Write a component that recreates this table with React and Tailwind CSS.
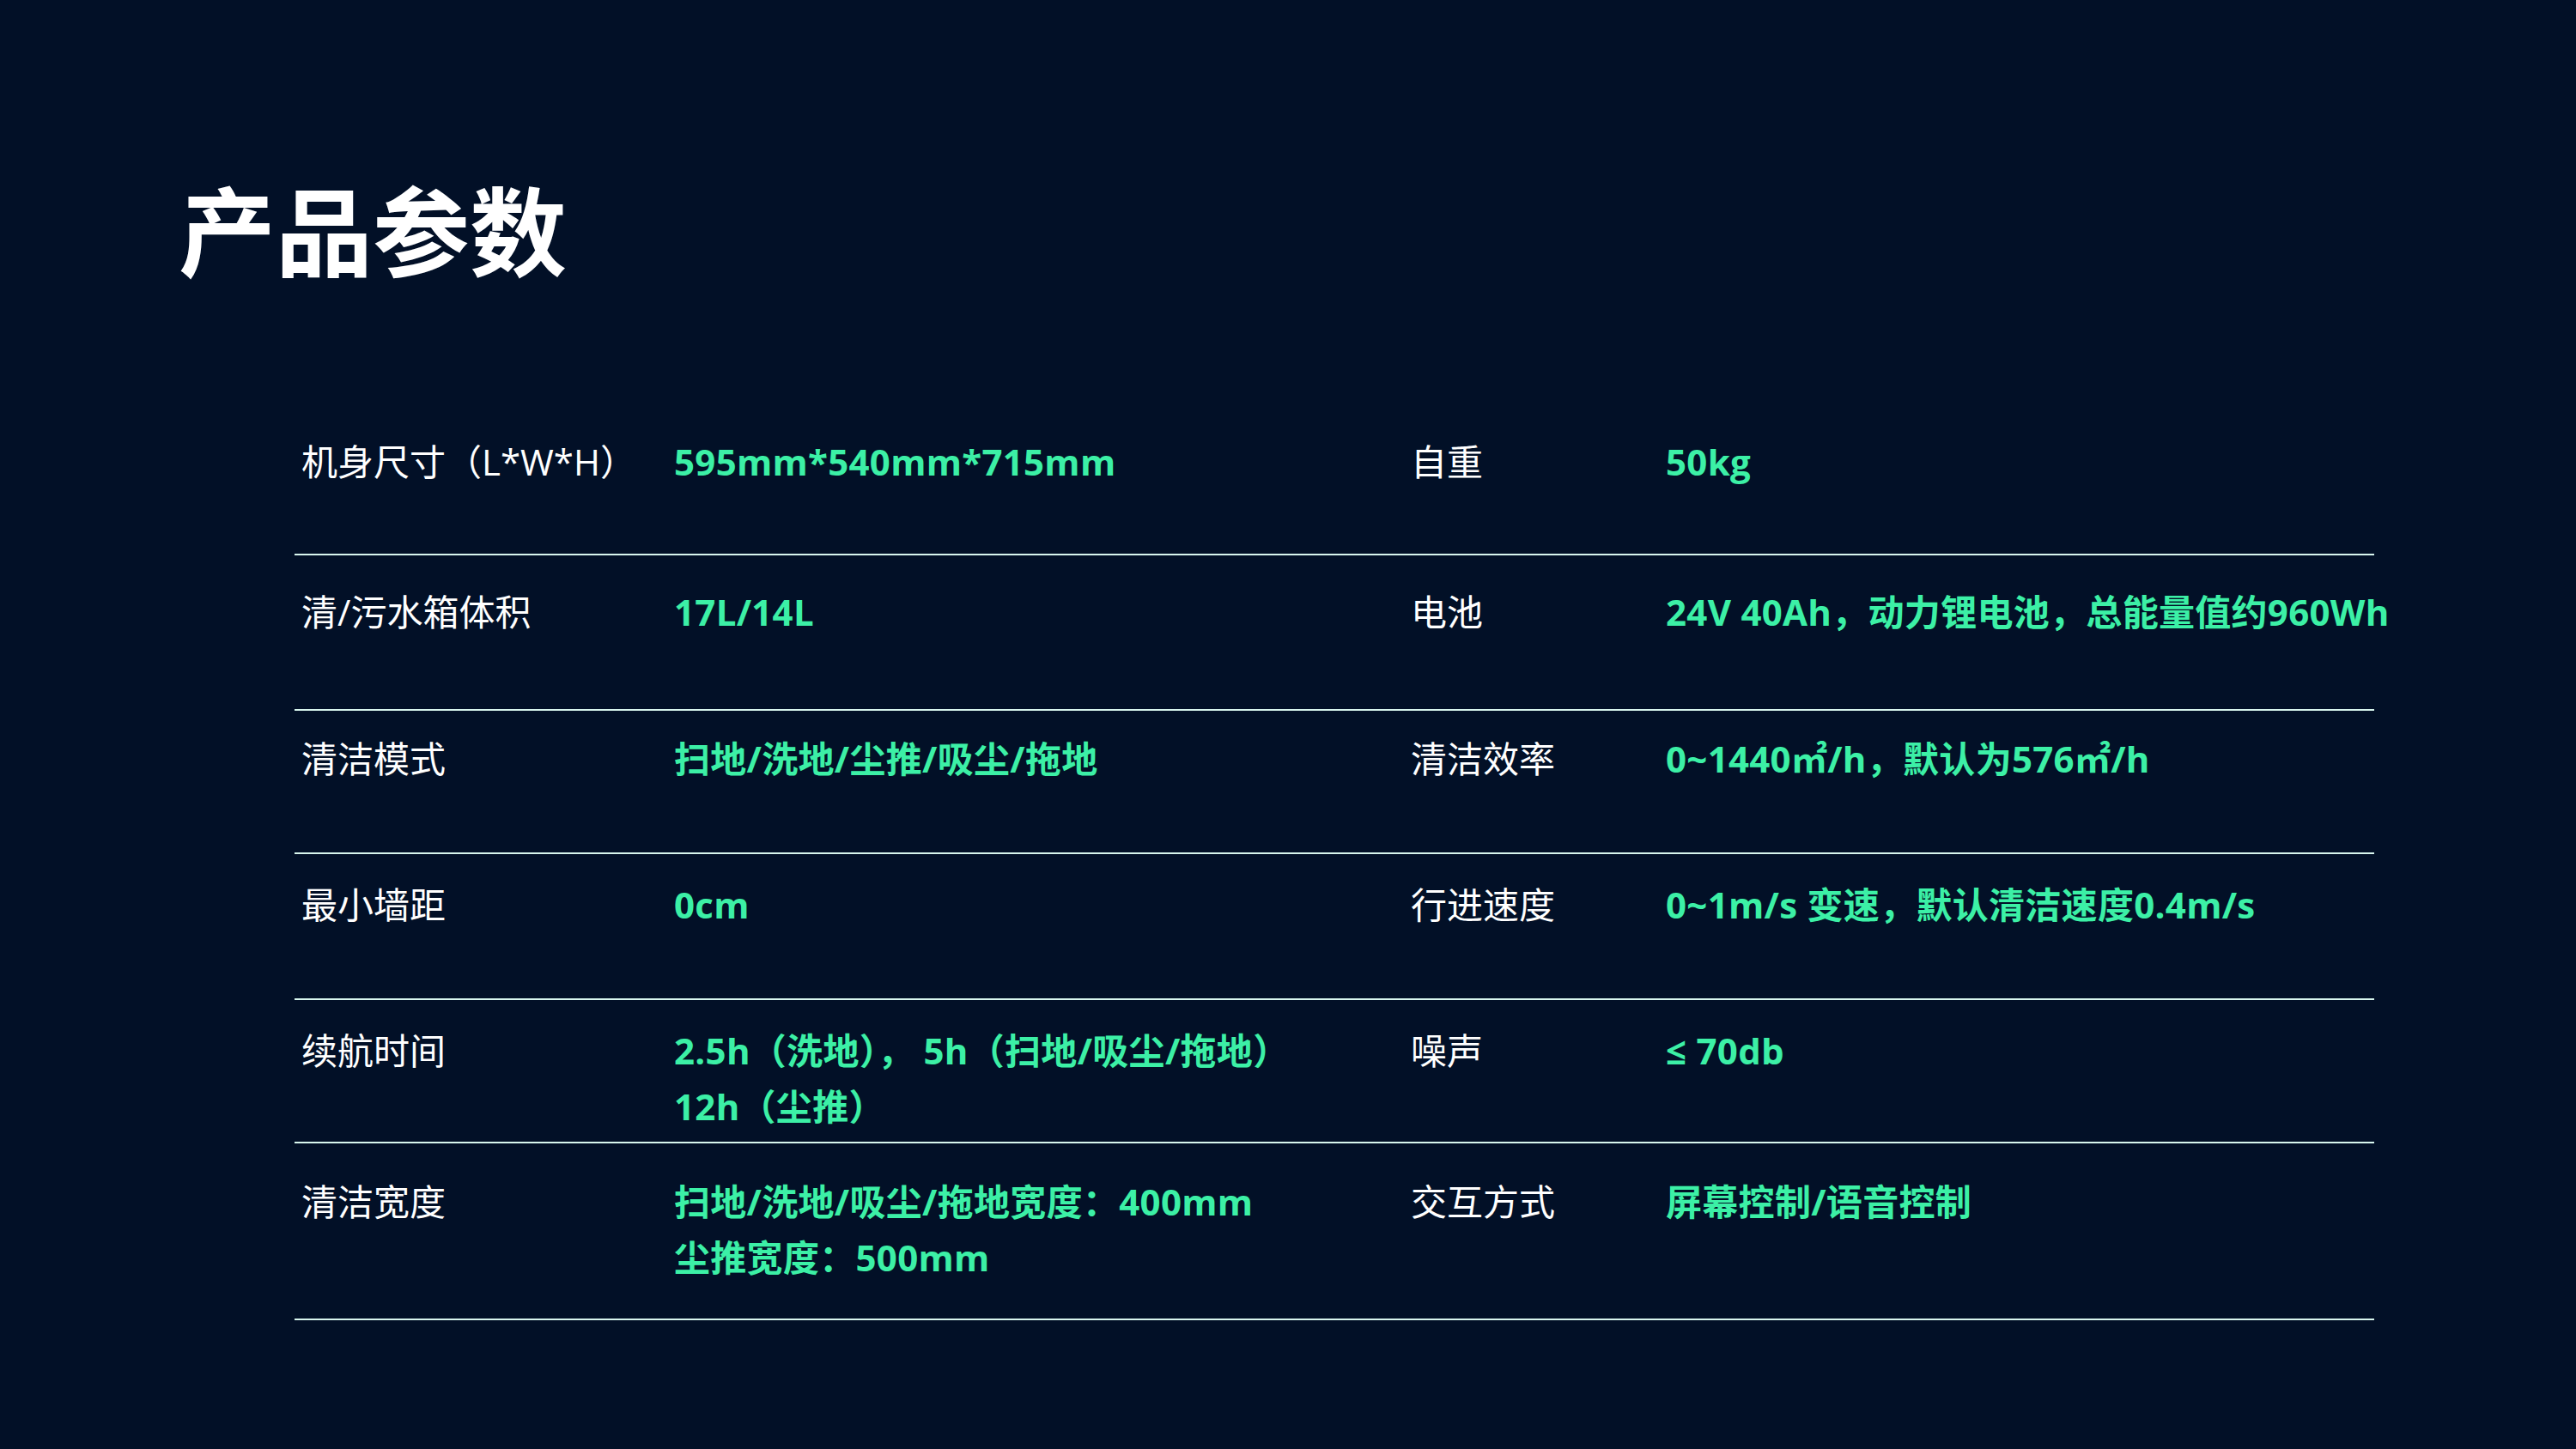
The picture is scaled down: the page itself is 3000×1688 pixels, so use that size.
import React from 'react';

const rows = [
  { h: 'h-[167px]', pt: 'pt-[25px]', l1: '机身尺寸（L*W*H）', v1: ['595mm*540mm*715mm'], l2: '自重', v2: ['50kg'] },
  { h: 'h-[181px]', pt: 'pt-[33px]', l1: '清/污水箱体积', v1: ['17L/14L'], l2: '电池', v2: ['24V 40Ah，动力锂电池，总能量值约960Wh'] },
  { h: 'h-[167px]', pt: 'pt-[23px]', l1: '清洁模式', v1: ['扫地/洗地/尘推/吸尘/拖地'], l2: '清洁效率', v2: ['0~1440㎡/h，默认为576㎡/h'] },
  { h: 'h-[170px]', pt: 'pt-[26px]', l1: '最小墙距', v1: ['0cm'], l2: '行进速度', v2: ['0~1m/s 变速，默认清洁速度0.4m/s'] },
  { h: 'h-[167px]', pt: 'pt-[26px]', l1: '续航时间', v1: ['2.5h（洗地）， 5h（扫地/吸尘/拖地）', '12h（尘推）'], l2: '噪声', v2: ['≤ 70db'] },
  { h: 'h-[206px]', pt: 'pt-[35px]', l1: '清洁宽度', v1: ['扫地/洗地/吸尘/拖地宽度：400mm', '尘推宽度：500mm'], l2: '交互方式', v2: ['屏幕控制/语音控制'] },
];

function Value({ lines }) {
  return (
    <div className="text-[#3cf0a6] font-bold whitespace-nowrap tracking-[0.3px]">
      {lines.map((t) => (
        <div key={t}>{t}</div>
      ))}
    </div>
  );
}

export default function App() {
  return (
    <div
      className="w-[3000px] h-[1688px] bg-[#021027] overflow-hidden"
      style={{ fontFamily: '"Open Sans", "Noto Sans CJK SC", sans-serif' }}
    >
      <h1 className="pt-[213px] pl-[208px] text-white font-bold text-[113px] leading-none">产品参数</h1>

      <div className="ml-[343px] mt-[154px] w-[2422px] text-[42px] leading-[65px]">
        {rows.map((r) => (
          <div
            key={r.l1}
            className={`grid grid-cols-[442px_858px_297px_1fr] border-b-2 border-[#d8f6ee] ${r.h} ${r.pt}`}
          >
            <div className="pl-[8px] text-white whitespace-nowrap">{r.l1}</div>
            <Value lines={r.v1} />
            <div className="text-white whitespace-nowrap">{r.l2}</div>
            <Value lines={r.v2} />
          </div>
        ))}
      </div>
    </div>
  );
}
